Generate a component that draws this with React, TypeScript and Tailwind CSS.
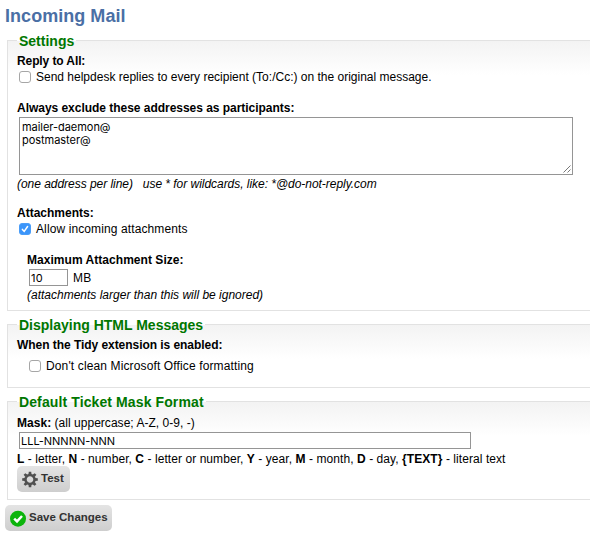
import type { ReactNode } from "react";

function Section({ title, className, titleClass = "", children }: { title: string; className: string; titleClass?: string; children: ReactNode }) {
  return (
    <section
      className={`ml-[7px] border border-r-0 border-[#e2e2e2] bg-gradient-to-b from-[#f3f3f3] to-white bg-[length:100%_34px] bg-no-repeat pl-[9px] ${className}`}
    >
      <h2
        className={`-mt-[9px] h-[18px] w-fit bg-[linear-gradient(to_bottom,white_9px,transparent_9px)] pr-[2px] pl-[2px] text-[14px] leading-[18px] font-bold text-[#007700] ${titleClass}`}
      >
        {title}
      </h2>
      {children}
    </section>
  );
}

function Checkbox({ checked = false }: { checked?: boolean }) {
  return (
    <span
      role="checkbox"
      aria-checked={checked}
      className={`flex size-3 items-center justify-center rounded-[3px] border tracking-normal ${
        checked ? "border-[#4a9df8] bg-[#3b95fa]" : "border-[#a6a6a6] bg-white"
      }`}
    >
      {checked && (
        <svg className="shrink-0" width="10" height="10" viewBox="0 0 10 10" fill="none" stroke="white" strokeWidth="1.5" strokeLinecap="round">
          <path d="M2.4 5.4 4.2 7.4 7.6 2.5" />
        </svg>
      )}
    </span>
  );
}

function Button({ icon, label, className }: { icon: ReactNode; label: string; className: string }) {
  return (
    <button
      className={`flex h-[26px] items-start rounded-[5px] bg-gradient-to-b from-[#e4e4e4] to-[#cecece] pl-[5px] text-[11.5px] leading-[14px] font-bold text-[#323232] ${className}`}
    >
      <span className="mt-[5px] mr-[3px]">{icon}</span>
      <span className="mt-[5px] whitespace-nowrap">{label}</span>
    </button>
  );
}

function GearIcon() {
  const teeth = [0, 45, 90, 135, 180, 225, 270, 315];
  return (
    <svg width="16" height="17" viewBox="0 0 16 17">
      <g transform="translate(8 8.5)" fill="#505050">
        {teeth.map((a) => (
          <path key={a} d="M-1.6-5-1.2-7.8H1.2L1.6-5Z" transform={`rotate(${a})`} />
        ))}
        <circle r="4.5" fill="none" stroke="#505050" strokeWidth="2.4" />
      </g>
    </svg>
  );
}

function CheckIcon() {
  return (
    <svg width="16" height="17" viewBox="0 0 16 17">
      <circle cx="8" cy="8.7" r="8" fill="#0cb40c" />
      <path d="M4.2 8.7 7 11.4 12 6" fill="none" stroke="white" strokeWidth="2.5" />
    </svg>
  );
}

export default function App() {
  return (
    <main className="h-[538px] w-[590px] overflow-hidden bg-white font-['Liberation_Sans',Arial,sans-serif] text-[12px] leading-[14px] whitespace-nowrap text-black">
      <h1 className="h-10 pt-[6px] pl-[5px] text-[18px] leading-[21px] font-bold tracking-[0.04px] text-[#4a6fa5]">Incoming Mail</h1>

      <Section title="Settings" className="h-[271px]">
        <div className="mt-1 font-bold tracking-[-0.1px]">Reply to All:</div>
        <label className="mt-[2px] flex items-center gap-[5px] pl-[2px]">
          <Checkbox />
          Send helpdesk replies to every recipient (To:/Cc:) on the original message.
        </label>
        <div className="mt-[17px] font-bold tracking-[-0.03px]">Always exclude these addresses as participants:</div>
        <div className="mt-[2px] ml-[2px] flex h-[58px] w-[554px] justify-between border border-[#959595] bg-white">
          <div className="pt-[3px] pl-[2px] font-['Inter',sans-serif] text-[11px] leading-[13px] tracking-[-0.04px]">
            mailer-daemon@
            <br />
            postmaster@
          </div>
          <svg className="mr-px mb-px self-end" width="8" height="8" viewBox="0 0 8 8" stroke="#555" strokeWidth="0.8">
            <path d="M0.5 7.5 7.5 0.5M4.5 7.5 7.5 4.5" />
          </svg>
        </div>
        <div className="mt-[2px] tracking-[-0.036px] italic">
          (one address per line) &nbsp; use * for wildcards, like: *@do-not-reply.com
        </div>
        <div className="mt-[15px] font-bold">Attachments:</div>
        <label className="mt-[2px] flex items-center gap-[5px] pl-[2px] tracking-[0.11px]">
          <Checkbox checked />
          Allow incoming attachments
        </label>
        <div className="mt-[17px] pl-[10px]">
          <div className="font-bold tracking-[0.04px]">Maximum Attachment Size:</div>
          <div className="mt-[2px] flex h-[17px] gap-[5px] pl-[2px]">
            <div className="w-[39px] border border-[#959595] bg-white pl-[1px] font-['Inter',sans-serif] text-[11px] leading-[17px] tracking-[0.3px]">
              10
            </div>
            <span className="mt-[2px] tracking-[0.2px]">MB</span>
          </div>
          <div className="mt-[2px] italic">(attachments larger than this will be ignored)</div>
        </div>
      </Section>

      <Section title="Displaying HTML Messages" className="mt-[13px] h-[64px]">
        <div className="mt-1 font-bold tracking-[-0.05px]">When the Tidy extension is enabled:</div>
        <label className="mt-[7px] flex items-center gap-[5px] pl-[12px] tracking-[0.13px]">
          <Checkbox />
          Don't clean Microsoft Office formatting
        </label>
      </Section>

      <Section title="Default Ticket Mask Format" titleClass="tracking-[0.11px]" className="mt-[13px] h-[99px]">
        <div className="mt-[5px] tracking-[0.03px]">
          <b>Mask:</b> (all uppercase; A-Z, 0-9, -)
        </div>
        <div className="mt-[2px] ml-[2px] h-[17px] w-[452px] border border-[#959595] bg-white pl-[1px] font-['Inter',sans-serif] text-[11px] leading-[17px]">
          LLL-NNNNN-NNN
        </div>
        <div className="mt-[3px] tracking-[0.067px]">
          <b>L</b> - letter, <b>N</b> - number, <b>C</b> - letter or number, <b>Y</b> - year, <b>M</b> - month, <b>D</b> - day,{" "}
          <b>{"{TEXT}"}</b> - literal text
        </div>
        <Button icon={<GearIcon />} label="Test" className="w-[53px]" />
      </Section>

      <Button icon={<CheckIcon />} label="Save Changes" className="mt-[5px] ml-[5px] w-[107px]" />
    </main>
  );
}
